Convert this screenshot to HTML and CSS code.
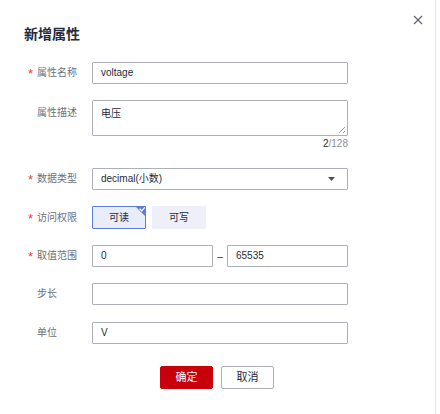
FILE: index.html
```html
<!DOCTYPE html>
<html lang="zh-CN">
<head>
<meta charset="utf-8">
<title>新增属性</title>
<link rel="stylesheet" href="styles.css">
</head>
<body>
<div class="dialog">
  <button class="close" type="button" aria-label="关闭">
    <svg width="10" height="10" viewBox="0 0 10 10"><path d="M1 1L9 9M9 1L1 9" stroke="#5f6470" stroke-width="1.2" fill="none"/></svg>
  </button>
  <h2 class="title">新增属性</h2>
  <div class="form">
    <div class="row">
      <label class="label req">属性名称</label>
      <div class="control"><div class="input">voltage</div></div>
    </div>
    <div class="row row-top">
      <label class="label">属性描述</label>
      <div class="control">
        <div class="textarea">电压<span class="grip"></span></div>
        <div class="counter"><span class="cur">2</span>/128</div>
      </div>
    </div>
    <div class="row">
      <label class="label req">数据类型</label>
      <div class="control">
        <div class="input select">
          <span>decimal(小数)</span>
          <svg class="arrow" width="7" height="4" viewBox="0 0 7 4"><path d="M0 0H7L3.5 4Z" fill="#4d505a"/></svg>
        </div>
      </div>
    </div>
    <div class="row">
      <label class="label req">访问权限</label>
      <div class="control toggles">
        <div class="toggle active">可读
          <svg class="corner" width="11" height="11" viewBox="0 0 11 11"><path d="M0 0H11V11Z" fill="#5e7ce0"/><path d="M4.6 2.8L6.8 4.8L9.8 1.4" stroke="#fff" stroke-width="1.2" fill="none"/></svg>
        </div>
        <div class="toggle">可写</div>
      </div>
    </div>
    <div class="row">
      <label class="label req">取值范围</label>
      <div class="control range">
        <div class="input half">0</div>
        <span class="dash">–</span>
        <div class="input half">65535</div>
      </div>
    </div>
    <div class="row">
      <label class="label">步长</label>
      <div class="control"><div class="input"></div></div>
    </div>
    <div class="row row-last">
      <label class="label">单位</label>
      <div class="control"><div class="input">V</div></div>
    </div>
  </div>
  <div class="actions">
    <button class="btn primary" type="button">确定</button>
    <button class="btn" type="button">取消</button>
  </div>
</div>
</body>
</html>
```
FILE: styles.css
```css
* { box-sizing: border-box; }
html, body { margin: 0; padding: 0; background: #fff; }
body {
  font-family: "Liberation Sans", "Noto Sans CJK SC", sans-serif;
  font-size: 10px;
  color: #252b3a;
}
.dialog {
  position: relative;
  width: 436px;
  height: 414px;
  border-right: 1px solid #e2e2e2;
}
.close {
  position: absolute;
  top: 15px;
  left: 413px;
  width: 10px;
  height: 10px;
  padding: 0;
  border: 0;
  background: none;
  display: flex;
}
.title {
  margin: 0;
  padding: 24px 0 0 24px;
  font-size: 14px;
  line-height: 20px;
  font-weight: bold;
  color: #252b3a;
}
.form {
  padding-top: 18px;
  display: flex;
  flex-direction: column;
  gap: 16px;
}
.row {
  display: flex;
  align-items: center;
}
.row-top { align-items: flex-start; }
.row-top .label { padding-top: 5px; }
.row-last { margin-top: 1px; }
.label {
  width: 92px;
  padding-left: 37px;
  color: #6b707c;
  line-height: 16px;
}
.label.req::before {
  content: "*";
  display: inline-block;
  width: 9px;
  margin-left: -9px;
  color: #e5393e;
  font-size: 13px;
  line-height: 10px;
  vertical-align: -2px;
}
.control { width: 256px; }
.input {
  height: 22px;
  border: 1px solid #adb0b8;
  border-radius: 1px;
  padding: 0 8px;
  line-height: 20px;
  color: #252b3a;
}
.textarea {
  position: relative;
  height: 36px;
  border: 1px solid #adb0b8;
  border-radius: 1px;
  padding: 5px 8px;
  line-height: 16px;
}
.grip {
  position: absolute;
  right: 2px;
  bottom: 2px;
  width: 6px;
  height: 6px;
  background: linear-gradient(135deg, transparent 45%, #999 45%, #999 55%, transparent 55%, transparent 75%, #999 75%, #999 85%, transparent 85%);
}
.counter {
  text-align: right;
  line-height: 16px;
  color: #8a8e99;
}
.counter .cur { color: #252b3a; }
.select {
  display: flex;
  align-items: center;
  justify-content: space-between;
}
.arrow { margin-right: 4px; }
.toggles {
  display: flex;
  gap: 6px;
}
.toggle {
  position: relative;
  width: 54px;
  height: 23px;
  line-height: 21px;
  text-align: center;
  background: #edf0f8;
  border: 1px solid #edf0f8;
  border-radius: 1px;
  color: #252b3a;
}
.toggle.active {
  background: #e9edfa;
  border-color: #5e7ce0;
}
.corner {
  position: absolute;
  top: -1px;
  right: -1px;
}
.range {
  display: flex;
  align-items: center;
}
.half { width: 121px; }
.dash {
  width: 14px;
  text-align: center;
  color: #252b3a;
}
.actions {
  margin-top: 22px;
  display: flex;
  justify-content: center;
  gap: 8px;
  padding-right: 1px;
}
.btn {
  width: 53px;
  height: 23px;
  padding: 0;
  border: 1px solid #adb0b8;
  border-radius: 2px;
  background: #fff;
  color: #252b3a;
  font-family: "Liberation Sans", "Noto Sans CJK SC", sans-serif;
  font-size: 11px;
  line-height: 21px;
}
.btn.primary {
  background: #c7000b;
  border-color: #c7000b;
  color: #fff;
}
```
